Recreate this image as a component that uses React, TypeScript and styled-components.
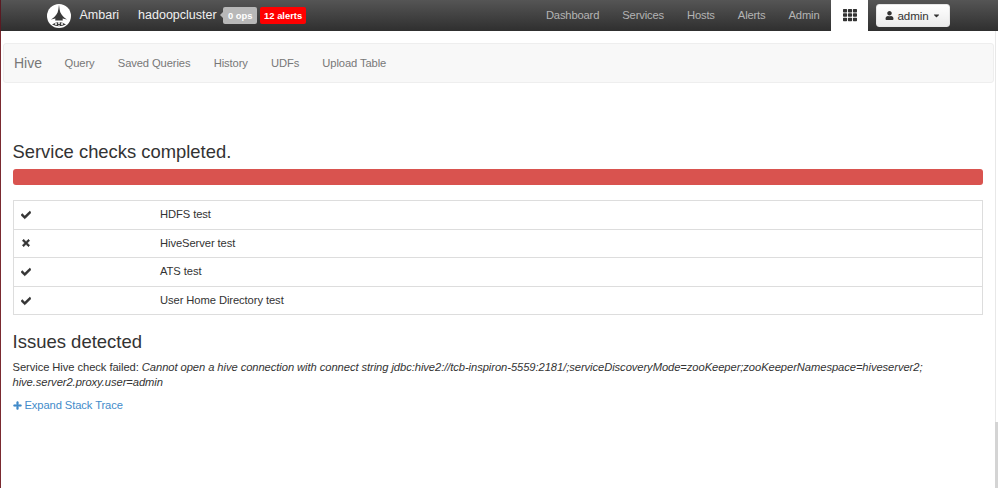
import React from "react";
import styled, { createGlobalStyle } from "styled-components";
import { FaCheck, FaTimes, FaPlus, FaTh, FaUser, FaCaretDown } from "react-icons/fa";

const Global = createGlobalStyle`
  html, body { margin: 0; padding: 0; background: #fff; }
  body { font-family: "Liberation Sans", Arial, sans-serif; color: #333; overflow: hidden; }
  * { box-sizing: border-box; }
`;

const Page = styled.div`
  width: 998px;
  height: 488px;
  display: flex;
  flex-direction: column;
`;

const TopBar = styled.header`
  height: 31px;
  flex: none;
  display: flex;
  align-items: center;
  padding-left: 47px;
  padding-right: 48px;
  background: linear-gradient(#555555, #2f2f2f);
  border-left: 1.5px solid #5a1a22;
`;

const LogoLink = styled.div`
  display: flex;
  align-items: center;
  gap: 9px;
  color: #eeeeee;
  font-size: 12.5px;
  margin-left: -1.5px;
  & > span {
    padding-bottom: 1px;
  }
`;

const ClusterName = styled.span`
  margin-left: 19px;
  padding-bottom: 1px;
  color: #f0f0f0;
  font-size: 12.5px;
`;

const Badge = styled.span<{ $tone: "gray" | "red" }>`
  position: relative;
  display: inline-block;
  height: 17px;
  line-height: 17px;
  margin-left: ${(p) => (p.$tone === "gray" ? "6.5px" : "3px")};
  padding: 0;
  width: ${(p) => (p.$tone === "gray" ? "34px" : "46px")};
  text-align: center;
  border-radius: 2px;
  font-size: 9.4px;
  font-weight: 700;
  color: #ffffff;
  background: ${(p) => (p.$tone === "gray" ? "#b8b8b8" : "#ff0000")};
  ${(p) =>
    p.$tone === "gray"
      ? `&::before {
    content: "";
    position: absolute;
    left: -3px;
    top: 5px;
    border-top: 3.5px solid transparent;
    border-bottom: 3.5px solid transparent;
    border-right: 3px solid #b8b8b8;
  }`
      : ""}
`;

const RightNav = styled.nav`
  margin-left: auto;
  display: flex;
  align-items: center;
  height: 100%;
`;

const TopLink = styled.a`
  color: #b4b4b4;
  font-size: 11.2px;
  letter-spacing: -0.15px;
  padding: 0 11.5px 1px;
`;

const AppsTab = styled.div`
  width: 37px;
  height: 31px;
  background: #fff;
  color: #333;
  display: flex;
  align-items: flex-start;
  justify-content: center;
  padding-top: 8px;
  font-size: 14px;
`;

const AdminButton = styled.button`
  margin-left: 8px;
  width: 74px;
  height: 23px;
  padding: 0;
  display: flex;
  align-items: center;
  justify-content: center;
  gap: 3px;
  border: 1px solid #e6e6e6;
  border-radius: 3px;
  background: linear-gradient(#ffffff, #ebebeb);
  color: #333;
  font-family: inherit;
  font-size: 11.6px;
  letter-spacing: -0.1px;
`;

const Body = styled.div`
  flex: 1;
  display: flex;
  min-height: 0;
  border-left: 1.5px solid #7a2a30;
`;

const Main = styled.main`
  flex: 1;
  min-width: 0;
  padding-top: 12px;
  padding-left: 1.5px;
`;

const ViewBar = styled.div`
  height: 40px;
  width: 991px;
  display: flex;
  align-items: center;
  background: #f8f8f8;
  border: 1px solid #eeeeee;
  border-radius: 3px;
  padding: 0 0 1px 10.5px;
`;

const Brand = styled.span`
  font-size: 14px;
  color: #777;
  margin-right: 11px;
`;

const ViewLink = styled.a`
  font-size: 11.2px;
  letter-spacing: -0.1px;
  color: #777;
  padding: 0 11.6px;
`;

const Content = styled.div`
  padding: 0 0 0 10px;
  width: 980px;
`;

const Title = styled.h3`
  margin: 58px 0 0;
  font-size: 18.4px;
  line-height: 22px;
  font-weight: 400;
  color: #333;
`;

const Progress = styled.div`
  margin-top: 6px;
  height: 16px;
  width: 970px;
  border-radius: 3px;
  background: #d9534f;
`;

const Table = styled.table`
  margin-top: 15px;
  width: 970px;
  border-collapse: collapse;
  border: 1px solid #dddddd;
  font-size: 11.2px;
  letter-spacing: -0.08px;
  color: #333;
`;

const Row = styled.tr`
  height: 28.6px;
  border-top: 1px solid #dddddd;
`;

const IconCell = styled.td`
  width: 147px;
  padding: 0 0 0 7px;
  font-size: 10px;
  line-height: 1;
  vertical-align: middle;
  & svg {
    stroke: currentColor;
    stroke-width: 35px;
    display: block;
  }
`;

const NameCell = styled.td`
  padding: 0 0 1px;
  vertical-align: middle;
`;

const Subtitle = styled.h3`
  margin: 16px 0 0;
  font-size: 18.5px;
  line-height: 22px;
  font-weight: 400;
  color: #333;
`;

const Message = styled.p`
  margin: 7px 0 0;
  font-size: 11.2px;
  letter-spacing: -0.07px;
  line-height: 15px;
  color: #333;
  width: 970px;
`;

const ExpandLink = styled.a`
  display: flex;
  align-items: center;
  gap: 3px;
  margin-top: 8px;
  color: #428bca;
  font-size: 11.2px;
  letter-spacing: -0.1px;
  line-height: 15px;
  & svg {
    stroke: currentColor;
    stroke-width: 30px;
  }
`;

const ScrollTrack = styled.div`
  width: 3px;
  flex: none;
  display: flex;
  flex-direction: column;
  justify-content: flex-end;
  border-left: 1px solid #e8e8e8;
`;

const ScrollThumb = styled.div`
  height: 66px;
  margin-left: -1px;
  background: #d4d4d4;
`;

const Logo = () => (
  <svg width="24" height="24" viewBox="0 0 24 24" aria-hidden="true">
    <circle cx="12" cy="12" r="12" fill="#ffffff" />
    <path d="M12 0.5 C12.4 4 12.8 7 13.4 8.5 C14.4 11 17 13.5 20 15.5 L15.6 14.6 L15.8 16.6 L8.2 16.6 L8.4 14.6 L4 15.5 C7 13.5 9.6 11 10.6 8.5 C11.2 7 11.6 4 12 0.5 Z" fill="#3a3a3a" />
    <path d="M5 20.5 Q12 15.5 19 20.5 Q12 24 5 20.5 Z" fill="#3a3a3a" />
    <circle cx="9" cy="20" r="1" fill="#fff" />
    <circle cx="12" cy="19" r="1" fill="#fff" />
    <circle cx="15" cy="20" r="1" fill="#fff" />
    <circle cx="12" cy="21.4" r="0.7" fill="#fff" />
  </svg>
);

const checks = [
  { ok: true, name: "HDFS test" },
  { ok: false, name: "HiveServer test" },
  { ok: true, name: "ATS test" },
  { ok: true, name: "User Home Directory test" },
];

export default function App() {
  return (
    <Page>
      <Global />
      <TopBar>
        <LogoLink>
          <Logo />
          <span>Ambari</span>
        </LogoLink>
        <ClusterName>hadoopcluster</ClusterName>
        <Badge $tone="gray">0 ops</Badge>
        <Badge $tone="red">12 alerts</Badge>
        <RightNav>
          {["Dashboard", "Services", "Hosts", "Alerts", "Admin"].map((l) => (
            <TopLink key={l}>{l}</TopLink>
          ))}
          <AppsTab>
            <FaTh />
          </AppsTab>
          <AdminButton>
            <FaUser size={9} />
            <span>admin</span>
            <FaCaretDown size={9} />
          </AdminButton>
        </RightNav>
      </TopBar>
      <Body>
        <Main>
          <ViewBar>
            <Brand>Hive</Brand>
            {["Query", "Saved Queries", "History", "UDFs", "Upload Table"].map((l) => (
              <ViewLink key={l}>{l}</ViewLink>
            ))}
          </ViewBar>
          <Content>
            <Title>Service checks completed.</Title>
            <Progress />
            <Table>
              <tbody>
                {checks.map((c) => (
                  <Row key={c.name}>
                    <IconCell>{c.ok ? <FaCheck /> : <FaTimes />}</IconCell>
                    <NameCell>{c.name}</NameCell>
                  </Row>
                ))}
              </tbody>
            </Table>
            <Subtitle>Issues detected</Subtitle>
            <Message>
              Service Hive check failed:{" "}
              <em>
                Cannot open a hive connection with connect string
                jdbc:hive2://tcb-inspiron-5559:2181/;serviceDiscoveryMode=zooKeeper;zooKeeperNamespace=hiveserver2;
                hive.server2.proxy.user=admin
              </em>
            </Message>
            <ExpandLink>
              <FaPlus size={9} />
              <span>Expand Stack Trace</span>
            </ExpandLink>
          </Content>
        </Main>
        <ScrollTrack>
          <ScrollThumb />
        </ScrollTrack>
      </Body>
    </Page>
  );
}
